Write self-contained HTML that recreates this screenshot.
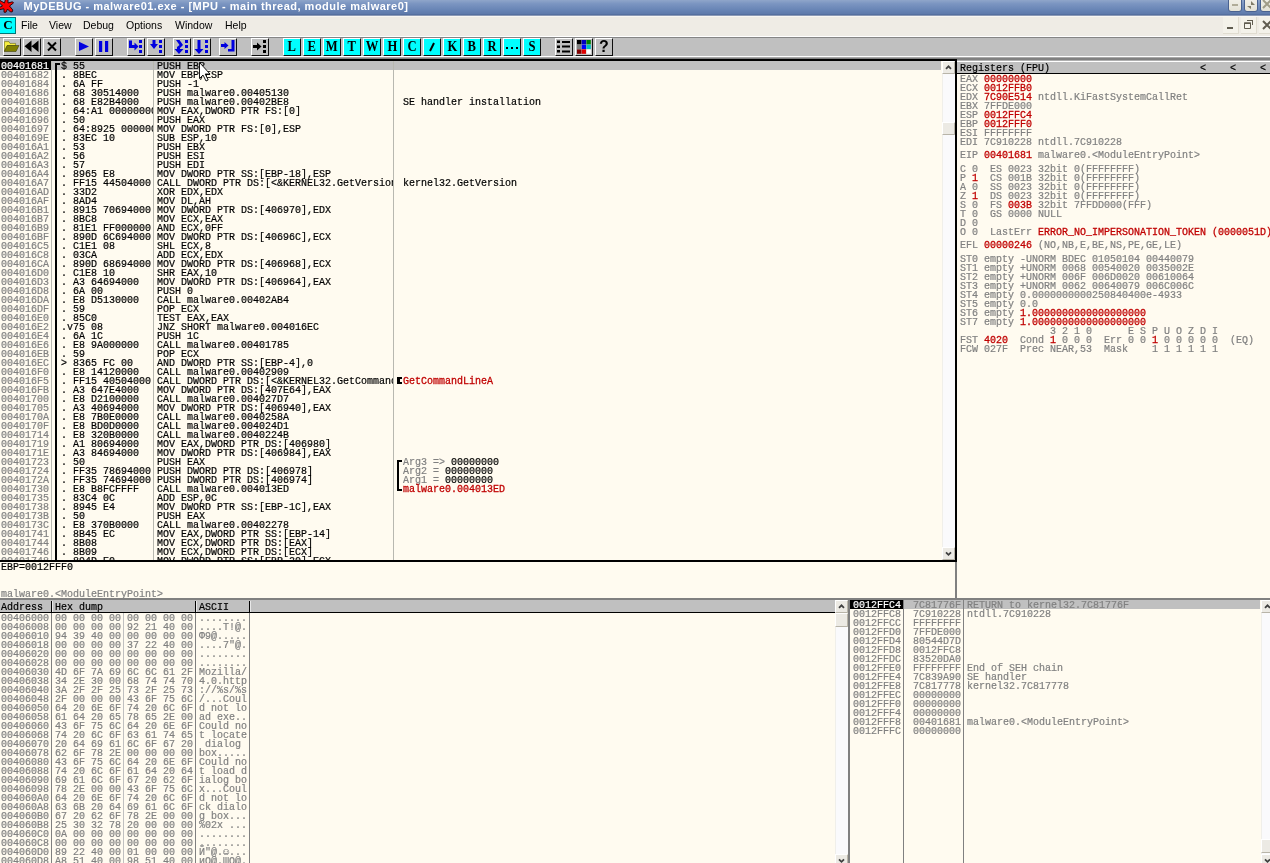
<!DOCTYPE html>
<html><head><meta charset="utf-8"><title>MyDEBUG - malware01.exe</title>
<style>
html,body{margin:0;padding:0}
body{width:1270px;height:863px;overflow:hidden;position:relative;background:#FFFBF0;font-family:"Liberation Sans",sans-serif}
.a{position:absolute}
.m{position:absolute;white-space:pre;font:10px/9px "Liberation Mono",monospace;height:9px;color:#000;letter-spacing:0;-webkit-text-stroke:0.2px}
.g{color:#808080}
.r{color:#C00000;-webkit-text-stroke:0.28px #C00000}
.k{color:#000}
.col{position:absolute;overflow:hidden}
.tb{position:absolute;top:38px;width:16px;height:16px;border:1px solid;border-color:#fff #101010 #101010 #fff;background:#C0C0C0}
.cy{background:#00FFFF;font:bold 14px/15px "Liberation Serif",serif;text-align:center;color:#000}
.lt{display:inline-block;transform:scaleX(.9)}
.sb{position:absolute;width:13px;background:#FAFAFC;box-shadow:inset 1px 0 0 #F0EFEA}
.sbb{position:absolute;left:0;width:11px;height:11px;border:1px solid;border-color:#fff #B8B4A8 #B8B4A8 #fff;background:#ECEAE4;border-radius:1px}
.hd{position:absolute;background:#C0C0C0}
</style></head><body><div id="root" style="position:absolute;left:0;top:0;width:1270px;height:863px;will-change:transform">

<div class="a" style="left:0;top:0;width:1270px;height:15px;background:linear-gradient(#8FA6CA 0%,#7B95C1 25%,#6683B4 70%,#5E7AAB 92%,#4E6898 100%)"></div>
<div class="a" style="left:23.5px;top:-2px;height:16px;font:bold 11px/16px 'Liberation Sans',sans-serif;color:#fff;white-space:pre;letter-spacing:0.49px" id="ttl">MyDEBUG - malware01.exe - [MPU - main thread, module malware0]</div>
<svg class="a" style="left:0;top:0" width="16" height="14" viewBox="0 0 16 14"><path d="M5.5 -1 L8 -1 L8 3 L12.5 1.8 L13.5 3 L9.5 6 L12.8 10 L12.3 11.8 L10.5 12 L7.5 9 L6 12.2 L4 12.2 L4 8.8 L0 9.5 L-1 7.5 L2.5 6 L-1 2.5 L0 0.5 L4.5 3 Z" fill="#FF0000" stroke="#200000" stroke-width="0.9" stroke-linejoin="round"/></svg>
<div class="a" style="left:1228px;top:-4px;width:12px;height:14px;border:1px solid #4A6290;border-radius:3px;background:linear-gradient(#F4F3EC,#E4E2D6)"></div>
<div class="a" style="left:1244px;top:-4px;width:12px;height:14px;border:1px solid #4A6290;border-radius:3px;background:linear-gradient(#F4F3EC,#E4E2D6)"></div>
<div class="a" style="left:1260px;top:-4px;width:12px;height:14px;border:1px solid #4A6290;border-radius:3px;background:linear-gradient(#F4F3EC,#E4E2D6)"></div>
<div class="a" style="left:1232px;top:4px;width:6px;height:2px;background:#B0AC98"></div>
<svg class="a" style="left:1245px;top:0" width="12" height="10" viewBox="0 0 12 10"><path d="M2 6 L6 6 L6 9 Z M6 1 L6 5 L10 5 Z" fill="#807C68"/></svg>
<svg class="a" style="left:1262px;top:0" width="10" height="10" viewBox="0 0 10 10"><path d="M1 0 L9 8 M9 0 L1 8" stroke="#A09C88" stroke-width="2"/></svg>
<div class="a" style="left:0;top:15px;width:1270px;height:21px;background:#EFECE5"></div>
<div class="a" style="left:0;top:15px;width:1270px;height:1px;background:#8C9AB6"></div>
<div class="a" style="left:0;top:16px;width:1270px;height:1px;background:#F8F7F3"></div>
<div class="a" style="left:0;top:36px;width:1270px;height:1px;background:#fff"></div>
<div class="a" style="left:-1px;top:17px;width:15px;height:15px;background:#00FFFF;border:1px solid #007878;font:bold 13px/13px 'Liberation Serif',serif;text-align:center;text-indent:1px;color:#000">C</div>
<div class="a mn" style="left:21px;top:18px;font:10.5px/14px 'Liberation Sans',sans-serif;color:#000;white-space:pre">File</div>
<div class="a mn" style="left:49px;top:18px;font:10.5px/14px 'Liberation Sans',sans-serif;color:#000;white-space:pre">View</div>
<div class="a mn" style="left:83px;top:18px;font:10.5px/14px 'Liberation Sans',sans-serif;color:#000;white-space:pre">Debug</div>
<div class="a mn" style="left:126px;top:18px;font:10.5px/14px 'Liberation Sans',sans-serif;color:#000;white-space:pre">Options</div>
<div class="a mn" style="left:175px;top:18px;font:10.5px/14px 'Liberation Sans',sans-serif;color:#000;white-space:pre">Window</div>
<div class="a mn" style="left:225px;top:18px;font:10.5px/14px 'Liberation Sans',sans-serif;color:#000;white-space:pre">Help</div>
<div class="a" style="left:1223px;top:17px;width:15px;height:16px;background:#F4F2EA;border-right:1px solid #E0DCD0;border-bottom:1px solid #E0DCD0"></div>
<div class="a" style="left:1241px;top:17px;width:15px;height:16px;background:#F4F2EA;border-right:1px solid #E0DCD0;border-bottom:1px solid #E0DCD0"></div>
<div class="a" style="left:1259px;top:17px;width:15px;height:16px;background:#F4F2EA;border-right:1px solid #E0DCD0;border-bottom:1px solid #E0DCD0"></div>
<div class="a" style="left:1227px;top:27px;width:6px;height:2px;background:#605C50"></div>
<svg class="a" style="left:1243px;top:19px" width="12" height="12" viewBox="0 0 12 12"><path d="M4.5 1.5 H9.5 V6 M1.5 4 H7.5 V9.5 H1.5 Z M1.5 4.5 H7.5" fill="none" stroke="#605C50" stroke-width="1"/><path d="M4 1 H10 V2 H4Z M1 3.5 H8 V5 H1Z" fill="#605C50"/></svg>
<svg class="a" style="left:1262px;top:20px" width="10" height="10" viewBox="0 0 10 10"><path d="M1 1 L9 9 M9 1 L1 9" stroke="#605C50" stroke-width="2"/></svg>
<div class="a" style="left:0;top:37px;width:1270px;height:19px;background:#C0C0C0"></div>
<div class="a" style="left:0;top:37px;width:1270px;height:1px;background:#858585"></div>
<div class="a" style="left:0;top:56px;width:1270px;height:1px;background:#fff"></div>
<div class="a" style="left:0;top:57px;width:1270px;height:1px;background:#A8A8A8"></div>
<div class="a" style="left:0;top:58px;width:1270px;height:2px;background:#808080"></div>
<div class="a" style="left:0;top:60px;width:1270px;height:1px;background:#B0B0B0"></div>
<div class="tb " style="left:3px"><svg width="16" height="16" viewBox="0 0 16 16" style="display:block"><path d="M0.4 2.6 H5 L6 4.4 H11.6 V6.6 H3.2 L0.4 12.4 Z" fill="#F8F040" stroke="#505000" stroke-width=".5"/><path d="M3.2 6.5 H15 L12 12.5 H0.4 Z" fill="#808000" stroke="#303000" stroke-width=".5"/></svg></div>
<div class="tb " style="left:23px"><svg width="16" height="16" viewBox="0 0 16 16" style="display:block"><path d="M7.5 1.5 V13 L0.5 7.25 Z M14.5 1.5 V13 L7.5 7.25 Z" fill="#000"/></svg></div>
<div class="tb " style="left:43px"><svg width="16" height="16" viewBox="0 0 16 16" style="display:block"><path d="M4 3.5 L12 11.5 M12 3.5 L4 11.5" stroke="#000" stroke-width="2"/></svg></div>
<div class="tb " style="left:75px"><svg width="16" height="16" viewBox="0 0 16 16" style="display:block"><path d="M3 2.7 L13 7.4 L3 12.1 Z" fill="#0000E0"/></svg></div>
<div class="tb " style="left:95px"><svg width="16" height="16" viewBox="0 0 16 16" style="display:block"><path d="M3 2 H6.2 V13 H3Z M9 2 H12.2 V13 H9Z" fill="#0000E0"/></svg></div>
<div class="tb " style="left:127px"><svg width="16" height="16" viewBox="0 0 16 16" style="display:block"><path d="M1 1.5 H4 V6 H6.5 V3.5 L10.5 7.5 L6.5 11.5 V9 H1 Z" fill="#0000E0"/><path d="M11 1 H14 V4 H11Z M11 6 H14 V9 H11Z M11 11 H14 V14 H11Z" fill="#0000E0"/></svg></div>
<div class="tb " style="left:147px"><svg width="16" height="16" viewBox="0 0 16 16" style="display:block"><path d="M4.5 1 H7.5 V5 H10 L6 10 L2 5 H4.5Z" fill="#0000E0"/><path d="M11 1 H14 V4 H11Z M11 6 H14 V9 H11Z M11 11 H14 V14 H11Z" fill="#0000E0"/></svg></div>
<div class="tb " style="left:173px"><svg width="16" height="16" viewBox="0 0 16 16" style="display:block"><path d="M2 1 H5.5 L9 6 L6 9 V10 H9.5 L5 15 L0.5 10 H3 V8 L5.5 6 Z" fill="#0000E0"/><path d="M11 1 H14 V4 H11Z M11 6 H14 V9 H11Z M11 11 H14 V14 H11Z" fill="#0000E0"/></svg></div>
<div class="tb " style="left:193px"><svg width="16" height="16" viewBox="0 0 16 16" style="display:block"><path d="M3.5 1 H6.5 V10 H9.5 L5 15 L0.5 10 H3.5 Z" fill="#0000E0"/><path d="M11 1 H14 V4 H11Z M11 6 H14 V9 H11Z M11 11 H14 V14 H11Z" fill="#0000E0"/></svg></div>
<div class="tb " style="left:219px"><svg width="16" height="16" viewBox="0 0 16 16" style="display:block"><path d="M1 5 H4.5 V3 L8.5 6.5 L4.5 10 V8 H1Z" fill="#0000E0"/><path d="M11.5 1 H14.5 V12.5 H8 V10 H11.5Z" fill="#0000E0"/></svg></div>
<div class="tb " style="left:251px"><svg width="16" height="16" viewBox="0 0 16 16" style="display:block"><path d="M1 6 H5 V3.5 L9.5 7.5 L5 11.5 V9 H1 Z" fill="#000"/><path d="M11 1 H14 V4 H11Z M11 6 H14 V9 H11Z M11 11 H14 V14 H11Z" fill="#000"/></svg></div>
<div class="tb cy" style="left:283px"><span class="lt">L</span></div>
<div class="tb cy" style="left:303px"><span class="lt">E</span></div>
<div class="tb cy" style="left:323px"><span class="lt">M</span></div>
<div class="tb cy" style="left:343px"><span class="lt">T</span></div>
<div class="tb cy" style="left:363px"><span class="lt">W</span></div>
<div class="tb cy" style="left:383px"><span class="lt">H</span></div>
<div class="tb cy" style="left:403px"><span class="lt">C</span></div>
<div class="tb cy" style="left:423px"><svg width="16" height="16" viewBox="0 0 16 16" style="display:block"><path d="M6 12 L10 4" stroke="#000" stroke-width="2"/></svg></div>
<div class="tb cy" style="left:443px"><span class="lt">K</span></div>
<div class="tb cy" style="left:463px"><span class="lt">B</span></div>
<div class="tb cy" style="left:483px"><span class="lt">R</span></div>
<div class="tb cy" style="left:503px"><svg width="16" height="16" viewBox="0 0 16 16" style="display:block"><path d="M2 8 H4 V10 H2Z M7 8 H9 V10 H7Z M12 8 H14 V10 H12Z" fill="#000"/></svg></div>
<div class="tb cy" style="left:523px"><span class="lt">S</span></div>
<div class="tb " style="left:555px"><svg width="16" height="16" viewBox="0 0 16 16" style="display:block"><path d="M1 1.5 H4 V4 H1Z M1 6.5 H4 V9 H1Z M1 11 H4 V13.5 H1Z M6 2 H14 V4 H6Z M6 6.5 H14 V8.5 H6Z M6 11.5 H14 V13.5 H6Z" fill="#000"/></svg></div>
<div class="tb " style="left:575px"><svg width="16" height="16" viewBox="0 0 16 16" style="display:block"><rect x="1.0" y="1.0" width="4.4" height="4.4" fill="#000"/><rect x="5.7" y="1.0" width="4.4" height="4.4" fill="#0000C0"/><rect x="10.4" y="1.0" width="4.4" height="4.4" fill="#008000"/><rect x="1.0" y="5.7" width="4.4" height="4.4" fill="#808080"/><rect x="5.7" y="5.7" width="4.4" height="4.4" fill="#0000FF"/><rect x="10.4" y="5.7" width="4.4" height="4.4" fill="#00C0C0"/><rect x="1.0" y="10.4" width="4.4" height="4.4" fill="#800000"/><rect x="5.7" y="10.4" width="4.4" height="4.4" fill="#E00000"/><rect x="10.4" y="10.4" width="4.4" height="4.4" fill="#fff"/></svg></div>
<div class="tb " style="font:bold 16px/15px 'Liberation Sans',sans-serif;text-align:center;color:#000;left:595px" style="left:595px">?</div>
<div class="a" style="left:0;top:59px;width:957px;height:2px;background:#000"></div>
<div class="a" style="left:955px;top:59px;width:2px;height:503px;background:#000"></div>
<div class="a" style="left:0;top:560px;width:957px;height:2px;background:#000"></div>
<div class="a" style="left:0;top:61px;width:51px;height:9px;background:#000"></div>
<div class="a" style="left:51px;top:61px;width:890px;height:9px;background:#C0C0C0"></div>
<div class="a" style="left:51px;top:61px;width:1px;height:499px;background:#B8B8B0"></div>
<div class="a" style="left:153px;top:61px;width:1px;height:499px;background:#B8B8B0"></div>
<div class="a" style="left:393px;top:61px;width:1px;height:499px;background:#B8B8B0"></div>
<div class="col" style="left:0px;top:61px;width:51px;height:499px">
<div class="m g" style="left:1px;top:1px"><span style="color:#fff">00401681</span></div>
<div class="m g" style="left:1px;top:10px">00401682</div>
<div class="m g" style="left:1px;top:19px">00401684</div>
<div class="m g" style="left:1px;top:28px">00401686</div>
<div class="m g" style="left:1px;top:37px">0040168B</div>
<div class="m g" style="left:1px;top:46px">00401690</div>
<div class="m g" style="left:1px;top:55px">00401696</div>
<div class="m g" style="left:1px;top:64px">00401697</div>
<div class="m g" style="left:1px;top:73px">0040169E</div>
<div class="m g" style="left:1px;top:82px">004016A1</div>
<div class="m g" style="left:1px;top:91px">004016A2</div>
<div class="m g" style="left:1px;top:100px">004016A3</div>
<div class="m g" style="left:1px;top:109px">004016A4</div>
<div class="m g" style="left:1px;top:118px">004016A7</div>
<div class="m g" style="left:1px;top:127px">004016AD</div>
<div class="m g" style="left:1px;top:136px">004016AF</div>
<div class="m g" style="left:1px;top:145px">004016B1</div>
<div class="m g" style="left:1px;top:154px">004016B7</div>
<div class="m g" style="left:1px;top:163px">004016B9</div>
<div class="m g" style="left:1px;top:172px">004016BF</div>
<div class="m g" style="left:1px;top:181px">004016C5</div>
<div class="m g" style="left:1px;top:190px">004016C8</div>
<div class="m g" style="left:1px;top:199px">004016CA</div>
<div class="m g" style="left:1px;top:208px">004016D0</div>
<div class="m g" style="left:1px;top:217px">004016D3</div>
<div class="m g" style="left:1px;top:226px">004016D8</div>
<div class="m g" style="left:1px;top:235px">004016DA</div>
<div class="m g" style="left:1px;top:244px">004016DF</div>
<div class="m g" style="left:1px;top:253px">004016E0</div>
<div class="m g" style="left:1px;top:262px">004016E2</div>
<div class="m g" style="left:1px;top:271px">004016E4</div>
<div class="m g" style="left:1px;top:280px">004016E6</div>
<div class="m g" style="left:1px;top:289px">004016EB</div>
<div class="m g" style="left:1px;top:298px">004016EC</div>
<div class="m g" style="left:1px;top:307px">004016F0</div>
<div class="m g" style="left:1px;top:316px">004016F5</div>
<div class="m g" style="left:1px;top:325px">004016FB</div>
<div class="m g" style="left:1px;top:334px">00401700</div>
<div class="m g" style="left:1px;top:343px">00401705</div>
<div class="m g" style="left:1px;top:352px">0040170A</div>
<div class="m g" style="left:1px;top:361px">0040170F</div>
<div class="m g" style="left:1px;top:370px">00401714</div>
<div class="m g" style="left:1px;top:379px">00401719</div>
<div class="m g" style="left:1px;top:388px">0040171E</div>
<div class="m g" style="left:1px;top:397px">00401723</div>
<div class="m g" style="left:1px;top:406px">00401724</div>
<div class="m g" style="left:1px;top:415px">0040172A</div>
<div class="m g" style="left:1px;top:424px">00401730</div>
<div class="m g" style="left:1px;top:433px">00401735</div>
<div class="m g" style="left:1px;top:442px">00401738</div>
<div class="m g" style="left:1px;top:451px">0040173B</div>
<div class="m g" style="left:1px;top:460px">0040173C</div>
<div class="m g" style="left:1px;top:469px">00401741</div>
<div class="m g" style="left:1px;top:478px">00401744</div>
<div class="m g" style="left:1px;top:487px">00401746</div>
<div class="m g" style="left:1px;top:496px">00401748</div>
</div>
<div class="col" style="left:52px;top:61px;width:101px;height:499px">
<div class="m " style="left:9px;top:1px">$ 55</div>
<div class="m " style="left:9px;top:10px">. 8BEC</div>
<div class="m " style="left:9px;top:19px">. 6A FF</div>
<div class="m " style="left:9px;top:28px">. 68 30514000</div>
<div class="m " style="left:9px;top:37px">. 68 E82B4000</div>
<div class="m " style="left:9px;top:46px">. 64:A1 00000000</div>
<div class="m " style="left:9px;top:55px">. 50</div>
<div class="m " style="left:9px;top:64px">. 64:8925 00000000</div>
<div class="m " style="left:9px;top:73px">. 83EC 10</div>
<div class="m " style="left:9px;top:82px">. 53</div>
<div class="m " style="left:9px;top:91px">. 56</div>
<div class="m " style="left:9px;top:100px">. 57</div>
<div class="m " style="left:9px;top:109px">. 8965 E8</div>
<div class="m " style="left:9px;top:118px">. FF15 44504000</div>
<div class="m " style="left:9px;top:127px">. 33D2</div>
<div class="m " style="left:9px;top:136px">. 8AD4</div>
<div class="m " style="left:9px;top:145px">. 8915 70694000</div>
<div class="m " style="left:9px;top:154px">. 8BC8</div>
<div class="m " style="left:9px;top:163px">. 81E1 FF000000</div>
<div class="m " style="left:9px;top:172px">. 890D 6C694000</div>
<div class="m " style="left:9px;top:181px">. C1E1 08</div>
<div class="m " style="left:9px;top:190px">. 03CA</div>
<div class="m " style="left:9px;top:199px">. 890D 68694000</div>
<div class="m " style="left:9px;top:208px">. C1E8 10</div>
<div class="m " style="left:9px;top:217px">. A3 64694000</div>
<div class="m " style="left:9px;top:226px">. 6A 00</div>
<div class="m " style="left:9px;top:235px">. E8 D5130000</div>
<div class="m " style="left:9px;top:244px">. 59</div>
<div class="m " style="left:9px;top:253px">. 85C0</div>
<div class="m " style="left:9px;top:262px">.v75 08</div>
<div class="m " style="left:9px;top:271px">. 6A 1C</div>
<div class="m " style="left:9px;top:280px">. E8 9A000000</div>
<div class="m " style="left:9px;top:289px">. 59</div>
<div class="m " style="left:9px;top:298px">&gt; 8365 FC 00</div>
<div class="m " style="left:9px;top:307px">. E8 14120000</div>
<div class="m " style="left:9px;top:316px">. FF15 40504000</div>
<div class="m " style="left:9px;top:325px">. A3 647E4000</div>
<div class="m " style="left:9px;top:334px">. E8 D2100000</div>
<div class="m " style="left:9px;top:343px">. A3 40694000</div>
<div class="m " style="left:9px;top:352px">. E8 7B0E0000</div>
<div class="m " style="left:9px;top:361px">. E8 BD0D0000</div>
<div class="m " style="left:9px;top:370px">. E8 320B0000</div>
<div class="m " style="left:9px;top:379px">. A1 80694000</div>
<div class="m " style="left:9px;top:388px">. A3 84694000</div>
<div class="m " style="left:9px;top:397px">. 50</div>
<div class="m " style="left:9px;top:406px">. FF35 78694000</div>
<div class="m " style="left:9px;top:415px">. FF35 74694000</div>
<div class="m " style="left:9px;top:424px">. E8 B8FCFFFF</div>
<div class="m " style="left:9px;top:433px">. 83C4 0C</div>
<div class="m " style="left:9px;top:442px">. 8945 E4</div>
<div class="m " style="left:9px;top:451px">. 50</div>
<div class="m " style="left:9px;top:460px">. E8 370B0000</div>
<div class="m " style="left:9px;top:469px">. 8B45 EC</div>
<div class="m " style="left:9px;top:478px">. 8B08</div>
<div class="m " style="left:9px;top:487px">. 8B09</div>
<div class="m " style="left:9px;top:496px">. 894D E0</div>
</div>
<div class="col" style="left:154px;top:61px;width:239px;height:499px">
<div class="m " style="left:3px;top:1px">PUSH EBP</div>
<div class="m " style="left:3px;top:10px">MOV EBP,ESP</div>
<div class="m " style="left:3px;top:19px">PUSH -1</div>
<div class="m " style="left:3px;top:28px">PUSH malware0.00405130</div>
<div class="m " style="left:3px;top:37px">PUSH malware0.00402BE8</div>
<div class="m " style="left:3px;top:46px">MOV EAX,DWORD PTR FS:[0]</div>
<div class="m " style="left:3px;top:55px">PUSH EAX</div>
<div class="m " style="left:3px;top:64px">MOV DWORD PTR FS:[0],ESP</div>
<div class="m " style="left:3px;top:73px">SUB ESP,10</div>
<div class="m " style="left:3px;top:82px">PUSH EBX</div>
<div class="m " style="left:3px;top:91px">PUSH ESI</div>
<div class="m " style="left:3px;top:100px">PUSH EDI</div>
<div class="m " style="left:3px;top:109px">MOV DWORD PTR SS:[EBP-18],ESP</div>
<div class="m " style="left:3px;top:118px">CALL DWORD PTR DS:[&lt;&amp;KERNEL32.GetVersion&gt;]</div>
<div class="m " style="left:3px;top:127px">XOR EDX,EDX</div>
<div class="m " style="left:3px;top:136px">MOV DL,AH</div>
<div class="m " style="left:3px;top:145px">MOV DWORD PTR DS:[406970],EDX</div>
<div class="m " style="left:3px;top:154px">MOV ECX,EAX</div>
<div class="m " style="left:3px;top:163px">AND ECX,0FF</div>
<div class="m " style="left:3px;top:172px">MOV DWORD PTR DS:[40696C],ECX</div>
<div class="m " style="left:3px;top:181px">SHL ECX,8</div>
<div class="m " style="left:3px;top:190px">ADD ECX,EDX</div>
<div class="m " style="left:3px;top:199px">MOV DWORD PTR DS:[406968],ECX</div>
<div class="m " style="left:3px;top:208px">SHR EAX,10</div>
<div class="m " style="left:3px;top:217px">MOV DWORD PTR DS:[406964],EAX</div>
<div class="m " style="left:3px;top:226px">PUSH 0</div>
<div class="m " style="left:3px;top:235px">CALL malware0.00402AB4</div>
<div class="m " style="left:3px;top:244px">POP ECX</div>
<div class="m " style="left:3px;top:253px">TEST EAX,EAX</div>
<div class="m " style="left:3px;top:262px">JNZ SHORT malware0.004016EC</div>
<div class="m " style="left:3px;top:271px">PUSH 1C</div>
<div class="m " style="left:3px;top:280px">CALL malware0.00401785</div>
<div class="m " style="left:3px;top:289px">POP ECX</div>
<div class="m " style="left:3px;top:298px">AND DWORD PTR SS:[EBP-4],0</div>
<div class="m " style="left:3px;top:307px">CALL malware0.00402909</div>
<div class="m " style="left:3px;top:316px">CALL DWORD PTR DS:[&lt;&amp;KERNEL32.GetCommandLineA&gt;]</div>
<div class="m " style="left:3px;top:325px">MOV DWORD PTR DS:[407E64],EAX</div>
<div class="m " style="left:3px;top:334px">CALL malware0.004027D7</div>
<div class="m " style="left:3px;top:343px">MOV DWORD PTR DS:[406940],EAX</div>
<div class="m " style="left:3px;top:352px">CALL malware0.0040258A</div>
<div class="m " style="left:3px;top:361px">CALL malware0.004024D1</div>
<div class="m " style="left:3px;top:370px">CALL malware0.0040224B</div>
<div class="m " style="left:3px;top:379px">MOV EAX,DWORD PTR DS:[406980]</div>
<div class="m " style="left:3px;top:388px">MOV DWORD PTR DS:[406984],EAX</div>
<div class="m " style="left:3px;top:397px">PUSH EAX</div>
<div class="m " style="left:3px;top:406px">PUSH DWORD PTR DS:[406978]</div>
<div class="m " style="left:3px;top:415px">PUSH DWORD PTR DS:[406974]</div>
<div class="m " style="left:3px;top:424px">CALL malware0.004013ED</div>
<div class="m " style="left:3px;top:433px">ADD ESP,0C</div>
<div class="m " style="left:3px;top:442px">MOV DWORD PTR SS:[EBP-1C],EAX</div>
<div class="m " style="left:3px;top:451px">PUSH EAX</div>
<div class="m " style="left:3px;top:460px">CALL malware0.00402278</div>
<div class="m " style="left:3px;top:469px">MOV EAX,DWORD PTR SS:[EBP-14]</div>
<div class="m " style="left:3px;top:478px">MOV ECX,DWORD PTR DS:[EAX]</div>
<div class="m " style="left:3px;top:487px">MOV ECX,DWORD PTR DS:[ECX]</div>
<div class="m " style="left:3px;top:496px">MOV DWORD PTR SS:[EBP-20],ECX</div>
</div>
<div class="col" style="left:394px;top:61px;width:547px;height:499px">
<div class="m " style="left:3px;top:37px"> SE handler installation</div>
<div class="m " style="left:3px;top:118px"> kernel32.GetVersion</div>
<div class="m " style="left:3px;top:316px"> <span class="r">GetCommandLineA</span></div>
<div class="m " style="left:3px;top:397px"> <span class="g">Arg3 =&gt; </span>00000000</div>
<div class="m " style="left:3px;top:406px"> <span class="g">Arg2 = </span>00000000</div>
<div class="m " style="left:3px;top:415px"> <span class="g">Arg1 = </span>00000000</div>
<div class="m " style="left:3px;top:424px"> <span class="r">malware0.004013ED</span></div>
</div>
<div class="a" style="left:55px;top:63px;width:2px;height:497px;background:#000"></div>
<div class="a" style="left:55px;top:63px;width:5px;height:2px;background:#000"></div>
<div class="a" style="left:397px;top:460px;width:2px;height:31px;background:#000"></div>
<div class="a" style="left:397px;top:460px;width:5px;height:2px;background:#000"></div>
<div class="a" style="left:397px;top:489px;width:5px;height:2px;background:#000"></div>
<div class="a" style="left:397px;top:377px;width:3px;height:7px;background:#000"></div>
<div class="a" style="left:397px;top:377px;width:5px;height:2px;background:#000"></div>
<div class="a" style="left:397px;top:382px;width:5px;height:2px;background:#000"></div>
<div class="sb" style="left:942px;top:61px;height:499px">
<div class="sbb" style="top:0"><svg width="11" height="11" viewBox="0 0 11 11" style="display:block"><path d="M3 6.8 L5.5 4.3 L8 6.8" fill="none" stroke="#404040" stroke-width="1.8"/></svg></div>
<div class="sbb" style="top:61px;height:11px"></div>
<div class="sbb" style="top:486px"><svg width="11" height="11" viewBox="0 0 11 11" style="display:block"><path d="M3 4.3 L5.5 6.8 L8 4.3" fill="none" stroke="#404040" stroke-width="1.8"/></svg></div>
</div>
<div class="m" style="left:1px;top:563px">EBP=0012FFF0</div>
<div class="m g" style="left:1px;top:590px">malware0.&lt;ModuleEntryPoint&gt;</div>
<div class="a" style="left:0;top:598px;width:1270px;height:2px;background:#808080"></div>
<div class="a" style="left:955px;top:562px;width:2px;height:38px;background:#808080"></div>
<div class="a" style="left:957px;top:61px;width:313px;height:1px;background:#fff"></div>
<div class="hd" style="left:957px;top:62px;width:313px;height:11px"></div>
<div class="a" style="left:957px;top:73px;width:313px;height:1px;background:#000"></div>
<div class="m" style="left:960px;top:64px">Registers (FPU)                         &lt;    &lt;    &lt;</div>
<div class="m g" style="left:960px;top:75px">EAX <span class="r">00000000</span></div>
<div class="m g" style="left:960px;top:84px">ECX <span class="r">0012FFB0</span></div>
<div class="m g" style="left:960px;top:93px">EDX <span class="r">7C90E514</span> ntdll.KiFastSystemCallRet</div>
<div class="m g" style="left:960px;top:102px">EBX 7FFDE000</div>
<div class="m g" style="left:960px;top:111px">ESP <span class="r">0012FFC4</span></div>
<div class="m g" style="left:960px;top:120px">EBP <span class="r">0012FFF0</span></div>
<div class="m g" style="left:960px;top:129px">ESI FFFFFFFF</div>
<div class="m g" style="left:960px;top:138px">EDI 7C910228 ntdll.7C910228</div>
<div class="m g" style="left:960px;top:151px">EIP <span class="r">00401681</span> malware0.&lt;ModuleEntryPoint&gt;</div>
<div class="m g" style="left:960px;top:165px">C 0  ES 0023 32bit 0(FFFFFFFF)</div>
<div class="m g" style="left:960px;top:174px">P <span class="r">1</span>  CS 001B 32bit 0(FFFFFFFF)</div>
<div class="m g" style="left:960px;top:183px">A 0  SS 0023 32bit 0(FFFFFFFF)</div>
<div class="m g" style="left:960px;top:192px">Z <span class="r">1</span>  DS 0023 32bit 0(FFFFFFFF)</div>
<div class="m g" style="left:960px;top:201px">S 0  FS <span class="r">003B</span> 32bit 7FFDD000(FFF)</div>
<div class="m g" style="left:960px;top:210px">T 0  GS 0000 NULL</div>
<div class="m g" style="left:960px;top:219px">D 0</div>
<div class="m g" style="left:960px;top:228px">O 0  LastErr <span class="r">ERROR_NO_IMPERSONATION_TOKEN (0000051D)</span></div>
<div class="m g" style="left:960px;top:241px">EFL <span class="r">00000246</span> (NO,NB,E,BE,NS,PE,GE,LE)</div>
<div class="m g" style="left:960px;top:255px">ST0 empty -UNORM BDEC 01050104 00440079</div>
<div class="m g" style="left:960px;top:264px">ST1 empty +UNORM 0068 00540020 0035002E</div>
<div class="m g" style="left:960px;top:273px">ST2 empty +UNORM 006F 006D0020 00610064</div>
<div class="m g" style="left:960px;top:282px">ST3 empty +UNORM 0062 00640079 006C006C</div>
<div class="m g" style="left:960px;top:291px">ST4 empty 0.0000000000250840400e-4933</div>
<div class="m g" style="left:960px;top:300px">ST5 empty 0.0</div>
<div class="m g" style="left:960px;top:309px">ST6 empty <span class="r">1.0000000000000000000</span></div>
<div class="m g" style="left:960px;top:318px">ST7 empty <span class="r">1.0000000000000000000</span></div>
<div class="m g" style="left:960px;top:327px">               3 2 1 0      E S P U O Z D I</div>
<div class="m g" style="left:960px;top:336px">FST <span class="r">4020</span>  Cond <span class="r">1</span> 0 0 0  Err 0 0 <span class="r">1</span> 0 0 0 0 0  (EQ)</div>
<div class="m g" style="left:960px;top:345px">FCW 027F  Prec NEAR,53  Mask    1 1 1 1 1 1</div>
<div class="hd" style="left:0;top:600px;width:835px;height:12px"></div>
<div class="a" style="left:0;top:612px;width:835px;height:1px;background:#000"></div>
<div class="a" style="left:51px;top:601px;width:1px;height:11px;background:#000"></div>
<div class="a" style="left:52px;top:601px;width:1px;height:11px;background:#E8E8E8"></div>
<div class="a" style="left:51px;top:613px;width:1px;height:250px;background:#808080"></div>
<div class="a" style="left:195px;top:601px;width:1px;height:11px;background:#000"></div>
<div class="a" style="left:196px;top:601px;width:1px;height:11px;background:#E8E8E8"></div>
<div class="a" style="left:195px;top:613px;width:1px;height:250px;background:#808080"></div>
<div class="a" style="left:249px;top:601px;width:1px;height:11px;background:#000"></div>
<div class="a" style="left:250px;top:601px;width:1px;height:11px;background:#E8E8E8"></div>
<div class="a" style="left:249px;top:613px;width:1px;height:250px;background:#808080"></div>
<div class="a" style="left:123px;top:613px;width:1px;height:250px;background:#C0C0C0"></div>
<div class="m" style="left:1px;top:603px">Address</div>
<div class="m" style="left:55px;top:603px">Hex dump</div>
<div class="m" style="left:199px;top:603px">ASCII</div>
<div class="m g" style="left:1px;top:614px">00406000</div>
<div class="m g" style="left:55px;top:614px">00 00 00 00 00 00 00 00</div>
<div class="m g" style="left:199px;top:614px">........</div>
<div class="m g" style="left:1px;top:623px">00406008</div>
<div class="m g" style="left:55px;top:623px">00 00 00 00 92 21 40 00</div>
<div class="m g" style="left:199px;top:623px">....Т!@.</div>
<div class="m g" style="left:1px;top:632px">00406010</div>
<div class="m g" style="left:55px;top:632px">94 39 40 00 00 00 00 00</div>
<div class="m g" style="left:199px;top:632px">Ф9@.....</div>
<div class="m g" style="left:1px;top:641px">00406018</div>
<div class="m g" style="left:55px;top:641px">00 00 00 00 37 22 40 00</div>
<div class="m g" style="left:199px;top:641px">....7"@.</div>
<div class="m g" style="left:1px;top:650px">00406020</div>
<div class="m g" style="left:55px;top:650px">00 00 00 00 00 00 00 00</div>
<div class="m g" style="left:199px;top:650px">........</div>
<div class="m g" style="left:1px;top:659px">00406028</div>
<div class="m g" style="left:55px;top:659px">00 00 00 00 00 00 00 00</div>
<div class="m g" style="left:199px;top:659px">........</div>
<div class="m g" style="left:1px;top:668px">00406030</div>
<div class="m g" style="left:55px;top:668px">4D 6F 7A 69 6C 6C 61 2F</div>
<div class="m g" style="left:199px;top:668px">Mozilla/</div>
<div class="m g" style="left:1px;top:677px">00406038</div>
<div class="m g" style="left:55px;top:677px">34 2E 30 00 68 74 74 70</div>
<div class="m g" style="left:199px;top:677px">4.0.http</div>
<div class="m g" style="left:1px;top:686px">00406040</div>
<div class="m g" style="left:55px;top:686px">3A 2F 2F 25 73 2F 25 73</div>
<div class="m g" style="left:199px;top:686px">://%s/%s</div>
<div class="m g" style="left:1px;top:695px">00406048</div>
<div class="m g" style="left:55px;top:695px">2F 00 00 00 43 6F 75 6C</div>
<div class="m g" style="left:199px;top:695px">/...Coul</div>
<div class="m g" style="left:1px;top:704px">00406050</div>
<div class="m g" style="left:55px;top:704px">64 20 6E 6F 74 20 6C 6F</div>
<div class="m g" style="left:199px;top:704px">d not lo</div>
<div class="m g" style="left:1px;top:713px">00406058</div>
<div class="m g" style="left:55px;top:713px">61 64 20 65 78 65 2E 00</div>
<div class="m g" style="left:199px;top:713px">ad exe..</div>
<div class="m g" style="left:1px;top:722px">00406060</div>
<div class="m g" style="left:55px;top:722px">43 6F 75 6C 64 20 6E 6F</div>
<div class="m g" style="left:199px;top:722px">Could no</div>
<div class="m g" style="left:1px;top:731px">00406068</div>
<div class="m g" style="left:55px;top:731px">74 20 6C 6F 63 61 74 65</div>
<div class="m g" style="left:199px;top:731px">t locate</div>
<div class="m g" style="left:1px;top:740px">00406070</div>
<div class="m g" style="left:55px;top:740px">20 64 69 61 6C 6F 67 20</div>
<div class="m g" style="left:199px;top:740px"> dialog </div>
<div class="m g" style="left:1px;top:749px">00406078</div>
<div class="m g" style="left:55px;top:749px">62 6F 78 2E 00 00 00 00</div>
<div class="m g" style="left:199px;top:749px">box.....</div>
<div class="m g" style="left:1px;top:758px">00406080</div>
<div class="m g" style="left:55px;top:758px">43 6F 75 6C 64 20 6E 6F</div>
<div class="m g" style="left:199px;top:758px">Could no</div>
<div class="m g" style="left:1px;top:767px">00406088</div>
<div class="m g" style="left:55px;top:767px">74 20 6C 6F 61 64 20 64</div>
<div class="m g" style="left:199px;top:767px">t load d</div>
<div class="m g" style="left:1px;top:776px">00406090</div>
<div class="m g" style="left:55px;top:776px">69 61 6C 6F 67 20 62 6F</div>
<div class="m g" style="left:199px;top:776px">ialog bo</div>
<div class="m g" style="left:1px;top:785px">00406098</div>
<div class="m g" style="left:55px;top:785px">78 2E 00 00 43 6F 75 6C</div>
<div class="m g" style="left:199px;top:785px">x...Coul</div>
<div class="m g" style="left:1px;top:794px">004060A0</div>
<div class="m g" style="left:55px;top:794px">64 20 6E 6F 74 20 6C 6F</div>
<div class="m g" style="left:199px;top:794px">d not lo</div>
<div class="m g" style="left:1px;top:803px">004060A8</div>
<div class="m g" style="left:55px;top:803px">63 6B 20 64 69 61 6C 6F</div>
<div class="m g" style="left:199px;top:803px">ck dialo</div>
<div class="m g" style="left:1px;top:812px">004060B0</div>
<div class="m g" style="left:55px;top:812px">67 20 62 6F 78 2E 00 00</div>
<div class="m g" style="left:199px;top:812px">g box...</div>
<div class="m g" style="left:1px;top:821px">004060B8</div>
<div class="m g" style="left:55px;top:821px">25 30 32 78 20 00 00 00</div>
<div class="m g" style="left:199px;top:821px">%02x ...</div>
<div class="m g" style="left:1px;top:830px">004060C0</div>
<div class="m g" style="left:55px;top:830px">0A 00 00 00 00 00 00 00</div>
<div class="m g" style="left:199px;top:830px">........</div>
<div class="m g" style="left:1px;top:839px">004060C8</div>
<div class="m g" style="left:55px;top:839px">00 00 00 00 00 00 00 00</div>
<div class="m g" style="left:199px;top:839px">........</div>
<div class="m g" style="left:1px;top:848px">004060D0</div>
<div class="m g" style="left:55px;top:848px">89 22 40 00 01 00 00 00</div>
<div class="m g" style="left:199px;top:848px">Й"@.☺...</div>
<div class="m g" style="left:1px;top:857px">004060D8</div>
<div class="m g" style="left:55px;top:857px">A8 51 40 00 98 51 40 00</div>
<div class="m g" style="left:199px;top:857px">иQ@.ШQ@.</div>
<div class="sb" style="left:835px;top:600px;height:267px">
<div class="sbb" style="top:0"><svg width="11" height="11" viewBox="0 0 11 11" style="display:block"><path d="M3 6.8 L5.5 4.3 L8 6.8" fill="none" stroke="#404040" stroke-width="1.8"/></svg></div>
<div class="sbb" style="top:13px;height:12px"></div>
<div class="sbb" style="top:254px"><svg width="11" height="11" viewBox="0 0 11 11" style="display:block"><path d="M3 4.3 L5.5 6.8 L8 4.3" fill="none" stroke="#404040" stroke-width="1.8"/></svg></div>
</div>
<div class="a" style="left:848px;top:600px;width:2px;height:263px;background:#808080"></div>
<div class="a" style="left:850px;top:600px;width:53px;height:9px;background:#000"></div>
<div class="a" style="left:903px;top:600px;width:357px;height:9px;background:#C0C0C0"></div>
<div class="a" style="left:903px;top:600px;width:1px;height:263px;background:#808080"></div>
<div class="a" style="left:963px;top:600px;width:1px;height:263px;background:#808080"></div>
<div class="m g" style="color:#fff;left:853px;top:601px">0012FFC4</div>
<div class="m g" style="left:913px;top:601px">7C81776F</div>
<div class="m g" style="left:967px;top:601px">RETURN to kernel32.7C81776F</div>
<div class="m g" style="left:853px;top:610px">0012FFC8</div>
<div class="m g" style="left:913px;top:610px">7C910228</div>
<div class="m g" style="left:967px;top:610px">ntdll.7C910228</div>
<div class="m g" style="left:853px;top:619px">0012FFCC</div>
<div class="m g" style="left:913px;top:619px">FFFFFFFF</div>
<div class="m g" style="left:853px;top:628px">0012FFD0</div>
<div class="m g" style="left:913px;top:628px">7FFDE000</div>
<div class="m g" style="left:853px;top:637px">0012FFD4</div>
<div class="m g" style="left:913px;top:637px">80544D7D</div>
<div class="m g" style="left:853px;top:646px">0012FFD8</div>
<div class="m g" style="left:913px;top:646px">0012FFC8</div>
<div class="m g" style="left:853px;top:655px">0012FFDC</div>
<div class="m g" style="left:913px;top:655px">83520DA0</div>
<div class="m g" style="left:853px;top:664px">0012FFE0</div>
<div class="m g" style="left:913px;top:664px">FFFFFFFF</div>
<div class="m g" style="left:967px;top:664px">End of SEH chain</div>
<div class="m g" style="left:853px;top:673px">0012FFE4</div>
<div class="m g" style="left:913px;top:673px">7C839A90</div>
<div class="m g" style="left:967px;top:673px">SE handler</div>
<div class="m g" style="left:853px;top:682px">0012FFE8</div>
<div class="m g" style="left:913px;top:682px">7C817778</div>
<div class="m g" style="left:967px;top:682px">kernel32.7C817778</div>
<div class="m g" style="left:853px;top:691px">0012FFEC</div>
<div class="m g" style="left:913px;top:691px">00000000</div>
<div class="m g" style="left:853px;top:700px">0012FFF0</div>
<div class="m g" style="left:913px;top:700px">00000000</div>
<div class="m g" style="left:853px;top:709px">0012FFF4</div>
<div class="m g" style="left:913px;top:709px">00000000</div>
<div class="m g" style="left:853px;top:718px">0012FFF8</div>
<div class="m g" style="left:913px;top:718px">00401681</div>
<div class="m g" style="left:967px;top:718px">malware0.&lt;ModuleEntryPoint&gt;</div>
<div class="m g" style="left:853px;top:727px">0012FFFC</div>
<div class="m g" style="left:913px;top:727px">00000000</div>
<div class="sb" style="left:1261px;top:600px;height:267px">
<div class="sbb" style="top:0"><svg width="11" height="11" viewBox="0 0 11 11" style="display:block"><path d="M3 6.8 L5.5 4.3 L8 6.8" fill="none" stroke="#404040" stroke-width="1.8"/></svg></div>
<div class="sbb" style="top:239px;height:12px"></div>
<div class="sbb" style="top:254px"><svg width="11" height="11" viewBox="0 0 11 11" style="display:block"><path d="M3 4.3 L5.5 6.8 L8 4.3" fill="none" stroke="#404040" stroke-width="1.8"/></svg></div>
</div>
<svg class="a" style="left:198.5px;top:61.5px" width="13" height="21" viewBox="0 0 13 21"><path d="M0.5 0.5 V16.5 L4 13 L7 19 L9.2 18 L6.2 12 H11 Z" fill="#fff" stroke="#000" stroke-width="0.9"/></svg>
</div></body></html>
